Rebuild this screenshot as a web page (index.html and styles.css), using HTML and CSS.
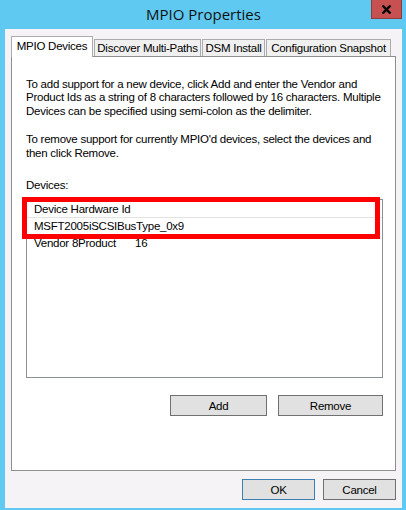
FILE: index.html
```html
<!DOCTYPE html>
<html lang="en">
<head>
  <meta charset="UTF-8" />
  <title>MPIO Properties</title>
  <link rel="stylesheet" href="styles.css">
</head>
<body>
  <div class="window">
    <div class="titlebar">
      <span></span>
      <span class="title">MPIO Properties</span>
      <button class="close">
        <svg width="11" height="9" viewBox="0 0 11 9"><path d="M1.5 0.5 L9.5 8.5 M9.5 0.5 L1.5 8.5" stroke="#000" stroke-width="2.4"/></svg>
      </button>
    </div>

    <div class="client">
      <div class="tabs">
        <div class="tab tab-active">MPIO Devices</div>
        <div class="tab tab-discover">Discover Multi-Paths</div>
        <div class="tab tab-dsm">DSM Install</div>
        <div class="tab tab-config">Configuration Snapshot</div>
      </div>

      <div class="panel">
        <p class="info">To add support for a new device, click Add and enter the Vendor and<br>Product Ids as a string of 8 characters followed by 16 characters. Multiple<br>Devices can be specified using semi-colon as the delimiter.</p>
        <p class="info second">To remove support for currently MPIO'd devices, select the devices and<br>then click Remove.</p>
        <p class="label">Devices:</p>

        <div class="list-wrap">
          <div class="list">
            <div class="list-head">Device Hardware Id</div>
            <div class="row">MSFT2005iSCSIBusType_0x9</div>
            <div class="row"><span class="col-vendor">Vendor 8Product</span>16</div>
          </div>
          <div class="highlight"></div>
        </div>

        <div class="actions">
          <button class="btn btn-add">Add</button>
          <button class="btn btn-remove">Remove</button>
        </div>
      </div>

      <div class="footer">
        <button class="btn btn-ok">OK</button>
        <button class="btn btn-cancel">Cancel</button>
      </div>
    </div>
  </div>
</body>
</html>
```

FILE: styles.css
```css
body {
  margin: 0;
  font-family: 'Liberation Sans', Arial, sans-serif;
  font-size: 11.5px;
  letter-spacing: -0.25px;
  color: #000;
}

.window {
  width: 406px;
  height: 510px;
  box-sizing: border-box;
  padding: 0 4px 2px 5px;
  background: #60c9f1;
  display: flex;
  flex-direction: column;
}

.titlebar {
  height: 29px;
  display: grid;
  grid-template-columns: 1fr auto 1fr;
}

.title {
  font-family: 'Open Sans', sans-serif;
  font-size: 15px;
  letter-spacing: 0;
  line-height: 28px;
  color: #111;
}

.close {
  justify-self: end;
  width: 31px;
  height: 19px;
  padding: 0;
  margin: 0;
  border: 1px solid #8e3b3b;
  border-top: none;
  background: #c75050;
  display: flex;
  align-items: center;
  justify-content: center;
}

.client {
  flex: 1;
  background: #f6f3f6;
  padding: 7px 6px 8px 6px;
  display: flex;
  flex-direction: column;
}

.tabs {
  height: 20px;
  display: flex;
  align-items: flex-end;
}

.tab {
  box-sizing: border-box;
  height: 17px;
  line-height: 16px;
  text-align: center;
  border: 1px solid #acacac;
  border-bottom: none;
  background: #f0f0f0;
  margin-left: 1px;
  white-space: nowrap;
}

.tab-active {
  width: 82px;
  height: 21px;
  line-height: 19px;
  margin-left: 0;
  margin-bottom: -1px;
  background: #fff;
  position: relative;
  z-index: 2;
}

.tab-discover {
  width: 107px;
}

.tab-dsm {
  width: 63px;
}

.tab-config {
  width: 125px;
}

.panel {
  flex: 1;
  background: #fff;
  border: 1px solid #8f8f8f;
  padding: 21px 12px 0 14px;
}

.info {
  margin: 0;
  line-height: 13.4px;
  white-space: nowrap;
}

.second {
  margin-top: 15px;
}

.label {
  margin: 19px 0 0;
  line-height: 13.4px;
}

.list-wrap {
  position: relative;
  margin-top: 7px;
}

.list {
  height: 177px;
  border: 1px solid #8c9099;
}

.list-head {
  padding: 2px 0 0 7px;
  line-height: 15px;
  border-bottom: 1px solid #e3e3e3;
}

.row {
  padding-left: 7px;
  line-height: 17px;
}

.col-vendor {
  display: inline-block;
  width: 101px;
}

.highlight {
  position: absolute;
  left: -4px;
  top: -2px;
  width: 348px;
  height: 32px;
  border: 5px solid #ff0000;
}

.actions {
  margin-top: 17px;
  display: flex;
  justify-content: flex-end;
  gap: 11px;
}

.btn {
  height: 21px;
  padding: 0;
  margin: 0;
  border: 1px solid #707070;
  background: #e1e1e1;
  font-family: inherit;
  font-size: 11.5px;
  letter-spacing: inherit;
  color: #000;
}

.btn-add {
  width: 97px;
}

.btn-remove {
  width: 105px;
}

.footer {
  margin-top: 8px;
  display: flex;
  justify-content: flex-end;
  gap: 8px;
}

.btn-ok,
.btn-cancel {
  width: 73px;
}

.btn-ok {
  border-color: #3c7fb1;
}
```
